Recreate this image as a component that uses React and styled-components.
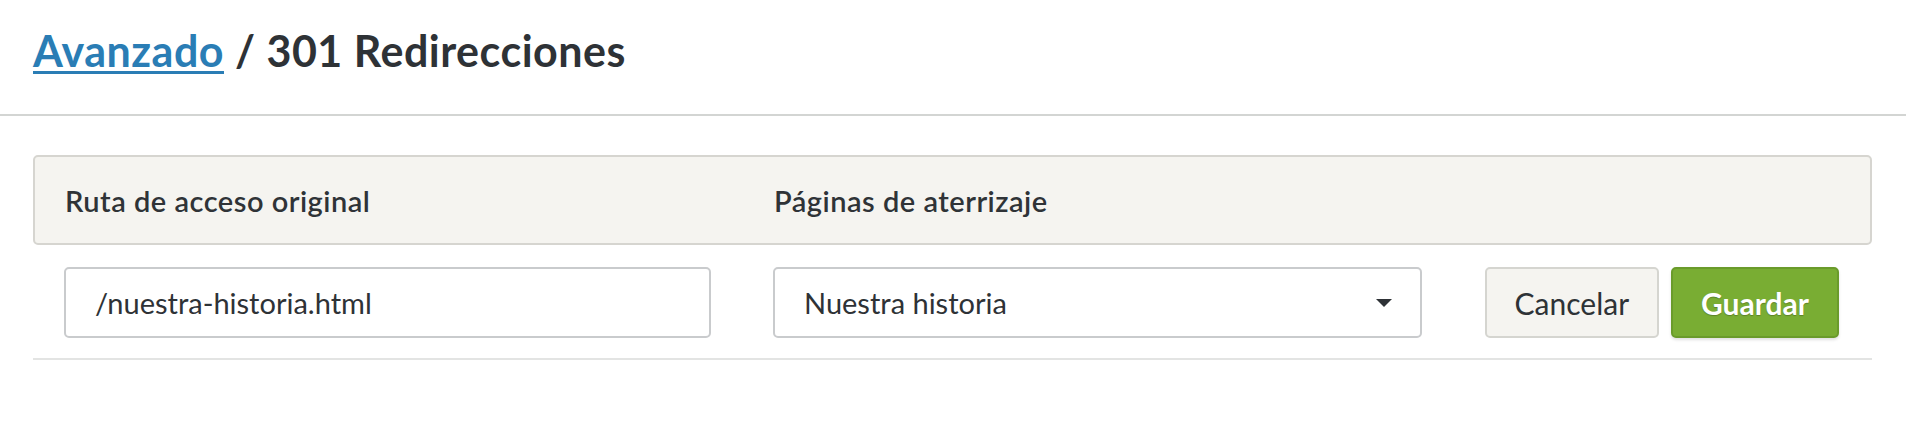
import styled, { createGlobalStyle } from "styled-components";

const GlobalStyle = createGlobalStyle`
  body {
    margin: 0;
    background: #ffffff;
    font-family: "Lato", "Liberation Sans", sans-serif;
    color: #2e3236;
  }
`;

const Page = styled.div`
  width: 1906px;
  height: 440px;
  background: #ffffff;
`;

const TitleBar = styled.header`
  height: 116px;
  border-bottom: 2px solid #d3d5d3;
  padding: 25px 33px 0;
  box-sizing: border-box;
`;

const Title = styled.h1`
  margin: 0;
  font-size: 43px;
  font-weight: 700;
  letter-spacing: 0.5px;
  color: #2e3236;
`;

const Crumb = styled.a`
  color: #2a7db5;
  text-decoration: underline;
  text-decoration-thickness: 3px;
  text-underline-offset: 4px;
`;

const Content = styled.main`
  padding: 39px 34px 0 33px;
`;

const Row = styled.div`
  display: grid;
  grid-template-columns: 709px 711px 1fr;
  align-items: center;
`;

const HeadRow = styled(Row)`
  height: 90px;
  box-sizing: border-box;
  background: #f5f4f0;
  border: 2px solid #d6d5d0;
  border-radius: 5px;
`;

const BodyRow = styled(Row)`
  padding: 22px 0 20px;
  border-bottom: 2px solid #e3e4e3;
`;

const HeadCell = styled.div`
  padding: 0 30px;
  font-size: 29px;
  font-weight: 600;
  letter-spacing: 0.5px;
  color: #2f3337;
`;

const Cell = styled.div`
  padding: 0 ${(p) => (p.$end ? "33px" : "31px")} 0 31px;
  display: flex;
  justify-content: ${(p) => (p.$end ? "flex-end" : "flex-start")};
  gap: 12px;
`;

const Field = styled.div`
  flex: 1;
  height: 71px;
  box-sizing: border-box;
  border: 2px solid #c9cbcd;
  border-radius: 5px;
  background: #ffffff;
  display: flex;
  align-items: center;
  justify-content: space-between;
  padding: 0 28px 0 29px;
  font-size: 29px;
  color: #2e3236;
`;

const Caret = styled.span`
  width: 0;
  height: 0;
  border-left: 8px solid transparent;
  border-right: 8px solid transparent;
  border-top: 8px solid #2e3236;
`;

const Button = styled.button`
  height: 71px;
  box-sizing: border-box;
  padding: 0 28px;
  border-radius: 5px;
  font-family: inherit;
  font-size: 30px;
  cursor: pointer;
  border: 2px solid ${(p) => (p.$primary ? "#6a9b2b" : "#d5d5d0")};
  background: ${(p) => (p.$primary ? "#79ad33" : "#f5f4f0")};
  color: ${(p) => (p.$primary ? "#ffffff" : "#2e3236")};
  font-weight: ${(p) => (p.$primary ? 700 : 400)};
  text-shadow: ${(p) => (p.$primary ? "0 1px 1px rgba(0,0,0,0.25)" : "none")};
  box-shadow: ${(p) => (p.$primary ? "0 2px 3px rgba(0,0,0,0.12)" : "none")};
`;

export default function App() {
  return (
    <Page>
      <GlobalStyle />
      <TitleBar>
        <Title>
          <Crumb href="#">Avanzado</Crumb> / 301 Redirecciones
        </Title>
      </TitleBar>
      <Content>
        <HeadRow>
          <HeadCell>Ruta de acceso original</HeadCell>
          <HeadCell>Páginas de aterrizaje</HeadCell>
          <HeadCell />
        </HeadRow>
        <BodyRow>
          <Cell>
            <Field>/nuestra-historia.html</Field>
          </Cell>
          <Cell>
            <Field>
              Nuestra historia
              <Caret />
            </Field>
          </Cell>
          <Cell $end>
            <Button>Cancelar</Button>
            <Button $primary>Guardar</Button>
          </Cell>
        </BodyRow>
      </Content>
    </Page>
  );
}
